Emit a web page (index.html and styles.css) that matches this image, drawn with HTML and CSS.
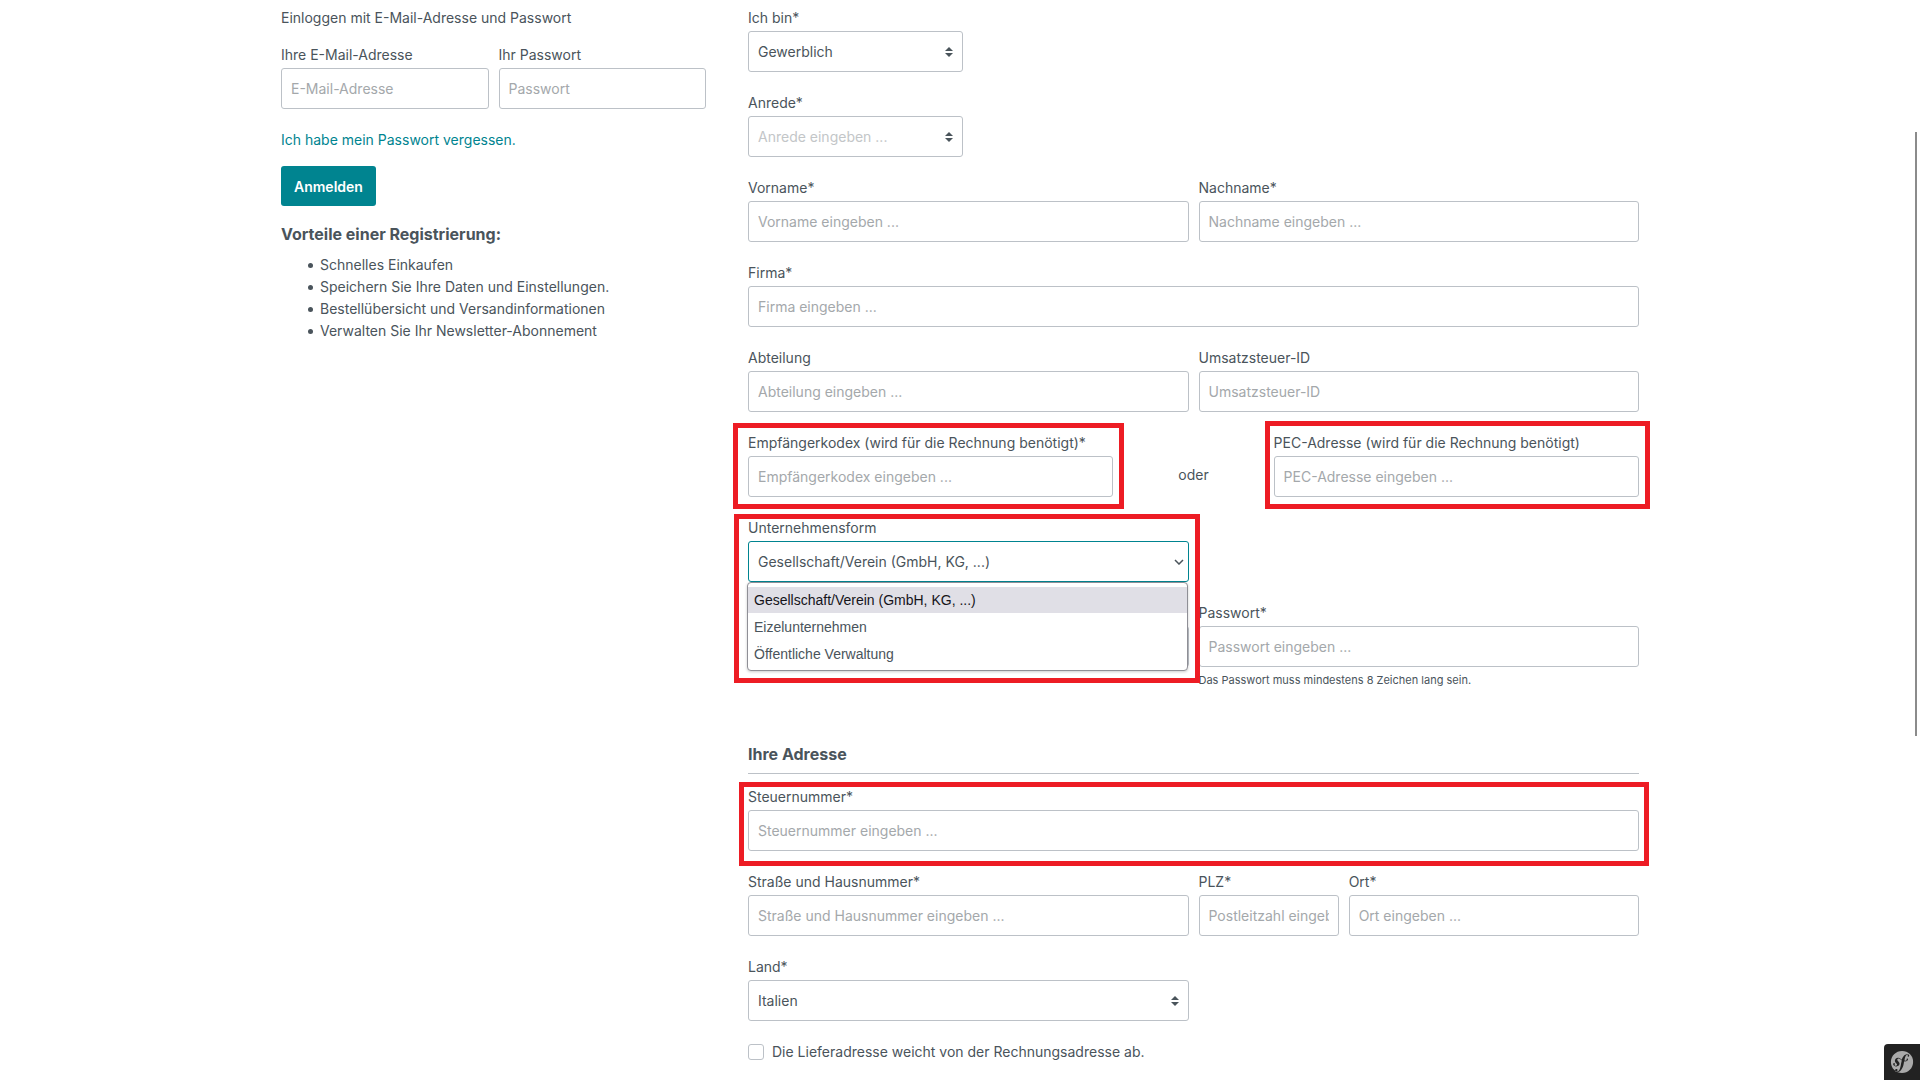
FILE: index.html
```html
<!DOCTYPE html>
<html lang="de">
<head>
  <meta charset="utf-8">
  <meta name="viewport" content="width=device-width, initial-scale=1">
  <title>Registrierung</title>
  <link rel="stylesheet" href="styles.css">
</head>
<body>
  <svg class="sprite" aria-hidden="true">
    <symbol id="sort" viewBox="0 0 8 10"><path d="M0 4 4 0l4 4zM0 6l4 4 4-4z" fill="currentColor"/></symbol>
    <symbol id="chevron" viewBox="0 0 10 6"><path d="M1 1l4 4 4-4" fill="none" stroke="currentColor" stroke-width="1.5"/></symbol>
  </svg>

  <main class="page">
    <form class="login">
      <p class="login-intro">Einloggen mit E-Mail-Adresse und Passwort</p>
      <div class="login-fields">
        <div class="field">
          <label for="login-mail">Ihre E-Mail-Adresse</label>
          <input class="control" id="login-mail" type="email" placeholder="E-Mail-Adresse">
        </div>
        <div class="field">
          <label for="login-password">Ihr Passwort</label>
          <input class="control" id="login-password" type="password" placeholder="Passwort">
        </div>
      </div>
      <a class="recover" href="#">Ich habe mein Passwort vergessen.</a>
      <button class="submit" type="submit">Anmelden</button>
      <h2 class="benefits-title">Vorteile einer Registrierung:</h2>
      <ul class="benefits">
        <li>Schnelles Einkaufen</li>
        <li>Speichern Sie Ihre Daten und Einstellungen.</li>
        <li>Bestellübersicht und Versandinformationen</li>
        <li>Verwalten Sie Ihr Newsletter-Abonnement</li>
      </ul>
    </form>

    <form class="register">
      <div class="grid">
        <div class="field span-3 row-start">
          <label for="type">Ich bin*</label>
          <div class="select">
            <select class="control" id="type"><option>Gewerblich</option></select>
            <svg class="sort"><use href="#sort"/></svg>
          </div>
        </div>
        <div class="field span-3 row-start">
          <label for="salutation">Anrede*</label>
          <div class="select">
            <select class="control unset" id="salutation"><option>Anrede eingeben ...</option></select>
            <svg class="sort"><use href="#sort"/></svg>
          </div>
        </div>
        <div class="field span-6 row-start">
          <label for="first-name">Vorname*</label>
          <input class="control" id="first-name" type="text" placeholder="Vorname eingeben ...">
        </div>
        <div class="field span-6">
          <label for="last-name">Nachname*</label>
          <input class="control" id="last-name" type="text" placeholder="Nachname eingeben ...">
        </div>
        <div class="field span-12">
          <label for="company">Firma*</label>
          <input class="control" id="company" type="text" placeholder="Firma eingeben ...">
        </div>
        <div class="field span-6">
          <label for="department">Abteilung</label>
          <input class="control" id="department" type="text" placeholder="Abteilung eingeben ...">
        </div>
        <div class="field span-6">
          <label for="vat">Umsatzsteuer-ID</label>
          <input class="control" id="vat" type="text" placeholder="Umsatzsteuer-ID">
        </div>
        <div class="field span-5 marked mark-code">
          <label for="code">Empfängerkodex (wird für die Rechnung benötigt)*</label>
          <input class="control" id="code" type="text" placeholder="Empfängerkodex eingeben ...">
        </div>
        <div class="or span-2">oder</div>
        <div class="field span-5 marked mark-pec">
          <label for="pec">PEC-Adresse (wird für die Rechnung benötigt)</label>
          <input class="control" id="pec" type="text" placeholder="PEC-Adresse eingeben ...">
        </div>
        <div class="field span-6 marked mark-legal">
          <label for="legal">Unternehmensform</label>
          <div class="select">
            <select class="control focused" id="legal"><option>Gesellschaft/Verein (GmbH, KG, ...)</option></select>
            <svg class="chevron"><use href="#chevron"/></svg>
            <ul class="options" role="listbox" aria-label="Unternehmensform">
              <li role="option" aria-selected="true">Gesellschaft/Verein (GmbH, KG, ...)</li>
              <li role="option" aria-selected="false">Eizelunternehmen</li>
              <li role="option" aria-selected="false">Öffentliche Verwaltung</li>
            </ul>
          </div>
        </div>
        <div class="field field-bottom span-6 row-start">
          <input class="control" id="mail" type="email" aria-label="E-Mail-Adresse">
        </div>
        <div class="field span-6">
          <label for="password">Passwort*</label>
          <input class="control" id="password" type="password" placeholder="Passwort eingeben ..." aria-describedby="password-hint">
        </div>
      </div>
      <div class="grid hint-row">
        <p class="hint" id="password-hint">Das Passwort muss mindestens 8 Zeichen lang sein.</p>
      </div>

      <h2 class="section-title">Ihre Adresse</h2>
      <div class="grid">
        <div class="field span-12 marked mark-tax">
          <label for="tax">Steuernummer*</label>
          <input class="control" id="tax" type="text" placeholder="Steuernummer eingeben ...">
        </div>
        <div class="field span-6">
          <label for="street">Straße und Hausnummer*</label>
          <input class="control" id="street" type="text" placeholder="Straße und Hausnummer eingeben ...">
        </div>
        <div class="field span-2">
          <label for="zip">PLZ*</label>
          <input class="control" id="zip" type="text" placeholder="Postleitzahl eingeben ...">
        </div>
        <div class="field span-4">
          <label for="city">Ort*</label>
          <input class="control" id="city" type="text" placeholder="Ort eingeben ...">
        </div>
        <div class="field span-6">
          <label for="country">Land*</label>
          <div class="select">
            <select class="control" id="country"><option>Italien</option></select>
            <svg class="sort"><use href="#sort"/></svg>
          </div>
        </div>
        <div class="check span-12">
          <input type="checkbox" id="other-address">
          <label for="other-address">Die Lieferadresse weicht von der Rechnungsadresse ab.</label>
        </div>
      </div>
    </form>
  </main>

  <div class="scroll-thumb"></div>
  <button class="toolbar" type="button" aria-label="Symfony">
    <svg viewBox="0 0 24 24"><path fill="#aaa" d="M12 .9C5.8.9.9 5.8.9 12a11 11 0 1 0 22.2 0A11 11 0 0 0 12 .9zm6.5 6c-.6 0-.9-.3-.9-.8 0-.2 0-.4.2-.6l.2-.4c0-.3-.4-.4-.5-.4-2 .1-2.5 2.7-2.9 4.8l-.2 1.1c1 .2 1.8 0 2.2-.3.6-.4-.2-.7-.1-1.2.1-.3.5-.5.7-.6.5 0 .8.5.8 1 0 .8-1.1 2-3.3 1.9l-.6-.1-.4 2.4c-.4 1.7-.8 4.1-2.6 6.2-1.5 1.9-3.1 2.1-3.8 2.1-1.3 0-2.1-.6-2.2-1.6 0-.9.8-1.4 1.3-1.4.7 0 1.2.5 1.2 1.1 0 .5-.2.6-.4.7-.1.1-.3.2-.3.4 0 .1.1.3.4.3.5 0 .9-.3 1.2-.5 1.3-1 1.7-2.9 2.4-6.2l.1-.8c.2-1.1.5-2.3.8-3.5-.9-.7-1.4-1.5-2.6-1.8-.8-.2-1.3 0-1.7.4-.4.5-.2 1.2.2 1.6l.7.7c.8.9 1.3 1.7 1.1 2.7-.3 1.6-2.1 2.8-4.3 2.1-1.9-.6-2.2-1.9-2-2.5.2-.6.6-.7 1.1-.6.5.2.7.7.6 1.2l-.1.3c-.2.1-.3.3-.3.4-.1.4.4.6.7.7.7.3 1.6-.2 1.8-.8.2-.6-.2-1.1-.4-1.2l-.8-.9c-.4-.4-1.2-1.5-.8-2.9.2-.5.5-1 .9-1.4 1-.8 2.1-.9 3.1-.6 1.3.4 1.9 1.2 2.7 1.9.4-1.3 1.1-2.6 2-3.8.9-1 2-1.7 3.3-1.8 1.3 0 2.2.5 2.2 1.4 0 .3-.2 1.1-1 1.1z"/></svg>
  </button>
</body>
</html>
```

FILE: styles.css
```css
*, *::before, *::after { box-sizing: border-box; }

body {
  margin: 0;
  background: #fff;
  color: #4a545b;
  font: 14px/21px Inter, "Noto Sans", sans-serif;
}

p, h2, ul { margin: 0; padding: 0; }

input, select, button { font: inherit; color: inherit; }

.sprite { position: absolute; width: 0; height: 0; }

.page {
  display: grid;
  grid-template-columns: 425fr 891fr;
  column-gap: 42px;
  max-width: 1398px;
  margin: 0 auto;
  padding: 7px 20px 16px;
}

/* Login column */
.login {
  display: flex;
  flex-direction: column;
  align-items: flex-start;
}

.login-intro { margin-bottom: 16px; }

.login-fields {
  display: grid;
  grid-template-columns: 1fr 1fr;
  gap: 10px;
  width: 100%;
}

.recover {
  margin: 20px 0 16px;
  color: #008490;
  text-decoration: none;
}

.submit {
  height: 40px;
  padding: 0 13px;
  border: 0;
  border-radius: 3px;
  background: #008490;
  color: #fff;
  font-weight: 600;
}

.benefits-title {
  margin: 16px 0 8px;
  font-size: 16px;
  line-height: 24px;
  font-weight: 700;
}

.benefits {
  padding-left: 27px;
  line-height: 22px;
  list-style: none;
}

.benefits li {
  display: flex;
  align-items: center;
  gap: 7px;
}

.benefits li::before {
  content: "";
  width: 5px;
  height: 5px;
  border-radius: 50%;
  background: currentColor;
}

/* Form fields */
.grid {
  display: grid;
  grid-template-columns: repeat(12, minmax(0, 1fr));
  gap: 20px 10px;
}

.span-2 { grid-column-end: span 2; }
.span-3 { grid-column-end: span 3; }
.span-4 { grid-column-end: span 4; }
.span-5 { grid-column-end: span 5; }
.span-6 { grid-column-end: span 6; }
.span-12 { grid-column-end: span 12; }
.row-start { grid-column-start: 1; }

.field {
  display: flex;
  flex-direction: column;
  gap: 3px;
  min-width: 0;
}

.field-bottom { justify-content: flex-end; }

.control {
  display: block;
  width: 100%;
  height: 41px;
  padding: 0 9px;
  border: 1px solid #bcc1c7;
  border-radius: 3px;
  background: #fff;
  appearance: none;
  outline: 0;
}

.control::placeholder { color: #a4a8ab; opacity: 1; }
.control.unset { color: #c3c6c8; }
.control.focused { border-color: #008490; }

.select { position: relative; }

.sort, .chevron {
  position: absolute;
  top: 0;
  bottom: 0;
  margin: auto 0;
  pointer-events: none;
}

.sort { right: 10px; width: 8px; height: 10px; }
.chevron { right: 5px; width: 10px; height: 6px; }

.options {
  position: absolute;
  z-index: 2;
  top: 100%;
  left: -1px;
  right: 1px;
  display: grid;
  gap: 1px;
  padding: 4px 0 3px;
  border: 1px solid #8f8f96;
  border-radius: 4px;
  background: #fff;
  box-shadow: 0 1px 3px #0003;
  font: 14px/26px "Liberation Sans", Arial, sans-serif;
  list-style: none;
}

.options li { padding: 0 6px; }
.options [aria-selected="true"] { background: #e0dfe6; color: #15141a; }

.or {
  align-self: end;
  padding-bottom: 12px;
  text-align: center;
}

.hint-row { margin-top: 3px; }

.hint {
  grid-column: 7 / -1;
  font-size: 11px;
  line-height: 20px;
}

.section-title {
  margin: 52px 0 12px;
  padding-bottom: 7px;
  border-bottom: 1px solid #bcc1c7;
  font-size: 16px;
  line-height: 24px;
  font-weight: 700;
}

.check {
  display: flex;
  align-items: center;
  gap: 8px;
}

.check input {
  width: 16px;
  height: 16px;
  margin: 0;
  border: 1px solid #bcc1c7;
  border-radius: 3px;
  appearance: none;
}

/* Red frames that point out the required invoice fields */
.marked { position: relative; }

.marked::after {
  content: "";
  position: absolute;
  border: 5px solid #ed1c24;
  pointer-events: none;
}

.mark-code::after { inset: -9px -11px -12px -15px; }
.mark-pec::after { inset: -11px -11px -12px -9px; }
.mark-legal::after { inset: -3px -11px -101px -14px; }
.mark-tax::after { inset: -4px -10px -15px -9px; }

.scroll-thumb {
  position: fixed;
  top: 132px;
  right: 3px;
  width: 2px;
  height: 604px;
  background: #8b8b8b;
}

.toolbar {
  position: fixed;
  right: 0;
  bottom: 0;
  display: grid;
  place-items: center;
  width: 36px;
  height: 36px;
  padding: 0;
  border: 0;
  border-radius: 4px 0 0;
  background: #222;
}

.toolbar svg { width: 24px; height: 24px; }
```
